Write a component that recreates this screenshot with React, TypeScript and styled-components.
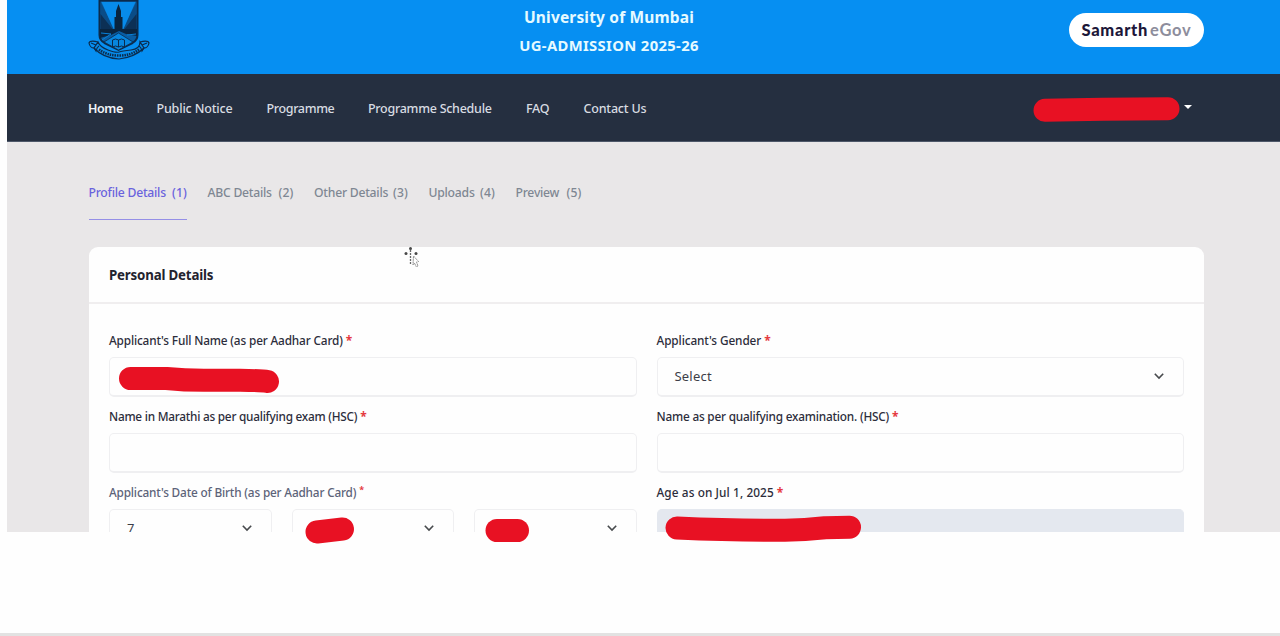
import React from "react";
import styled, { createGlobalStyle } from "styled-components";

const Global = createGlobalStyle`
  * { box-sizing: border-box; }
  body { margin: 0; background: #fff; font-family: "Noto Sans", "Open Sans", sans-serif; }
`;

const Page = styled.div`
  position: relative;
  width: 1280px;
  height: 636px;
  overflow: hidden;
  display: flex;
  flex-direction: column;
  justify-content: space-between;
  background: #fefefe;
`;

const Viewport = styled.div`
  height: 532px;
  margin-left: 7px;
  overflow: hidden;
  background: #e9e7e8;
`;

const BottomRule = styled.div`
  height: 3px;
  background: #e2e2e2;
`;

const Banner = styled.header`
  height: 74px;
  padding: 0 76px 0 81px;
  display: grid;
  grid-template-columns: 431px 180px 1fr;
  background: #068ff2;
`;

const Titles = styled.div`
  display: flex;
  flex-direction: column;
  align-items: center;
  padding-top: 3px;
  color: #e6faff;
  font-weight: 700;
  white-space: nowrap;
`;

const Title = styled.div<{ $size: number; $track: number }>`
  font-size: ${(p) => p.$size}px;
  letter-spacing: ${(p) => p.$track}px;
  line-height: 29px;
  &:first-child { line-height: 28px; }
`;

const Brand = styled.div`
  justify-self: end;
  margin-top: 13px;
  width: 135px;
  height: 34px;
  border-radius: 17px;
  background: #fff;
  display: flex;
  align-items: center;
  justify-content: center;
  gap: 2px;
  font-family: Lato, sans-serif;
  font-size: 16.5px;
  letter-spacing: 0.7px;
  line-height: 34px;
  color: #8d8d9c;
  font-weight: 700;
`;

const BrandStrong = styled.span`
  color: #1c1739;
  font-weight: 900;
`;

const Nav = styled.nav`
  height: 68px;
  padding: 2px 88px 0 81px;
  display: flex;
  align-items: center;
  gap: 34px;
  background: #252f40;
  border-bottom: 1px solid #4e5869;
`;

const NavItem = styled.a<{ $w: number; $track: number; $active?: boolean }>`
  width: ${(p) => p.$w}px;
  letter-spacing: ${(p) => p.$track}px;
  font-size: 12.5px;
  font-weight: ${(p) => (p.$active ? 600 : 500)};
  color: ${(p) => (p.$active ? "#f2f5f8" : "#d8dce2")};
  white-space: nowrap;
`;

const Caret = styled.i`
  margin-left: auto;
  margin-bottom: 3px;
  border: 4px solid transparent;
  border-top-color: #fff;
  border-bottom: 0;
`;

const Tabs = styled.div`
  height: 78px;
  margin: 0 81.5px;
  display: flex;
  gap: 20.5px;
`;

const Tab = styled.div<{ $w: number; $active?: boolean }>`
  width: ${(p) => p.$w}px;
  padding-top: 37px;
  display: flex;
  align-items: flex-start;
  justify-content: space-between;
  font-size: 12.2px;
  line-height: 27px;
  letter-spacing: -0.24px;
  font-weight: 500;
  white-space: nowrap;
  color: ${(p) => (p.$active ? "#6a63dd" : "#7f8793")};
  border-bottom: 1px solid ${(p) => (p.$active ? "#958fe6" : "transparent")};
`;

const TabNumber = styled.span`
  letter-spacing: 0.1px;
`;

const Card = styled.section`
  margin: 27px 0 0 82px;
  height: 340px;
  width: 1115px;
  background: #fefefe;
  border-radius: 9px 9px 0 0;
`;

const CardHead = styled.h2`
  margin: 0;
  height: 57px;
  padding: 0 20px;
  border-bottom: 2px solid #f0eeef;
  font-size: 13.3px;
  line-height: 56px;
  letter-spacing: -0.18px;
  font-weight: 700;
  color: #23232e;
`;

const Form = styled.div`
  padding: 26px 20px 0;
  display: grid;
  grid-template-columns: 527.5px 527.5px;
  column-gap: 20px;
  row-gap: 9px;
`;

const Field = styled.div`
  display: flex;
  flex-direction: column;
  gap: 7px;
`;

const Label = styled.label<{ $track: number; $muted?: boolean }>`
  height: 20px;
  font-size: 11.8px;
  line-height: 21px;
  letter-spacing: ${(p) => p.$track}px;
  font-weight: 500;
  white-space: nowrap;
  color: ${(p) => (p.$muted ? "#5c6379" : "#2c2d3b")};
`;

const Star = styled.span<{ $raised?: boolean }>`
  margin-left: 3px;
  color: #e53940;
  font-size: ${(p) => (p.$raised ? 9 : 12)}px;
  font-weight: 700;
  line-height: 0;
  vertical-align: ${(p) => (p.$raised ? "4px" : "baseline")};
`;

const Control = styled.div<{ $disabled?: boolean }>`
  flex: 1;
  min-height: 40px;
  max-height: 40px;
  padding: 0 18px 1px 17px;
  display: flex;
  align-items: center;
  justify-content: space-between;
  border: 1px solid ${(p) => (p.$disabled ? "#e4e8ef" : "#efeff1")};
  border-bottom-width: 2px;
  border-radius: 5px;
  background: ${(p) => (p.$disabled ? "#e4e8ef" : "#fefefe")};
  font-size: 13px;
  letter-spacing: 0.2px;
  color: #3c3e48;
`;

const DateRow = styled.div`
  display: flex;
  gap: 20px;
`;

const Overlay = styled.svg`
  position: absolute;
  inset: 0;
  pointer-events: none;
`;

const Chevron = () => (
  <svg width="12" height="8" viewBox="0 0 12 8" fill="none" stroke="#474a4d" strokeWidth="1.6">
    <path d="M1.8 1.8 6 6l4.2-4.2" />
  </svg>
);

const Crest = () => (
  <svg width="62" height="62" viewBox="0 0 62 62" fill="none" stroke="#0b2b4c">
    <path d="M11.5 0v35q0 5 5 8l14 7 14-7q5-3 5-8V0" fill="#0a5da2" strokeWidth="2" />
    <path d="M11 .7h39" strokeWidth="1.6" />
    <path d="M12.5 2 27 30H12.5zM48.5 2 34 30h14.5z" fill="#0a4c86" stroke="none" />
    <path d="M13.5 2h34L35 30h-9z" fill="#078bea" stroke="none" />
    <path d="M12.5 14v15h12zM48.5 14v15h-12z" fill="#0c3055" stroke="none" />
    <path d="M26.500 31V17h1.500v-6L30.500 4l2.500 7v6h1.500v14z" fill="#09243f" stroke="none" />
    <path d="M12 29h37v7l-11-2-7-3-8 4-11 3z" fill="#09243f" stroke="none" />
    <path d="M13 33l10 1-9 6M48 34l-9 1" stroke="#0880d8" />
    <path d="M30.5 33 45 42l-14.5 8L16 42z" fill="#0786df" strokeWidth=".8" />
    <path d="M24.5 40q3-2 6 0 3-2 6 0v7q-3-2-6 0-3-2-6 0zM30.5 40v7" strokeWidth="1" />
    <path d="M10 42q2 5 10 8t11 2 12-2 9-8l4 6q-9 9-25 11Q15 58 6 48z" fill="#078be9" strokeWidth="1.2" />
    <path d="M10 42q-8-2-9 1 1 5 5 5l2 3q1-4 3-5M52 42q8-2 9 1-1 5-5 5l-2 3q-1-4-3-5M3 43l5 2M59 43l-5 2" strokeWidth="1.2" />
    <path d="M11 49.500q8 6 20 6t20-6" strokeWidth="2.5" strokeDasharray="1.5 .9" />
  </svg>
);

const navItems: [string, number, number][] = [
  ["Home", 34.5, -0.4],
  ["Public Notice", 76, -0.17],
  ["Programme", 67.5, -0.35],
  ["Programme Schedule", 124, -0.27],
  ["FAQ", 23.5, -0.3],
  ["Contact Us", 64, -0.2],
];

const tabs: [string, number][] = [
  ["Profile Details", 98.5],
  ["ABC Details", 86],
  ["Other Details", 94],
  ["Uploads", 66.5],
  ["Preview", 66],
];

export default function App() {
  return (
    <Page>
      <Global />
      <Viewport>
        <Banner>
          <Crest />
          <Titles>
            <Title $size={15.5} $track={0.17}>University of Mumbai</Title>
            <Title $size={14.8} $track={0.35}>UG-ADMISSION 2025-26</Title>
          </Titles>
          <Brand>
            <BrandStrong>Samarth</BrandStrong>
            <span>eGov</span>
          </Brand>
        </Banner>
        <Nav>
          {navItems.map(([name, w, track], i) => (
            <NavItem key={name} $w={w} $track={track} $active={i === 0}>{name}</NavItem>
          ))}
          <Caret />
        </Nav>
        <Tabs>
          {tabs.map(([name, w], i) => (
            <Tab key={name} $w={w} $active={i === 0}>
              <span>{name}</span>
              <TabNumber>({i + 1})</TabNumber>
            </Tab>
          ))}
        </Tabs>
        <Card>
          <CardHead>Personal Details</CardHead>
          <Form>
            <Field>
              <Label $track={-0.15}>Applicant's Full Name (as per Aadhar Card)<Star>*</Star></Label>
              <Control />
            </Field>
            <Field>
              <Label $track={-0.1}>Applicant's Gender<Star>*</Star></Label>
              <Control><span>Select</span><Chevron /></Control>
            </Field>
            <Field>
              <Label $track={-0.24}>Name in Marathi as per qualifying exam (HSC)<Star>*</Star></Label>
              <Control />
            </Field>
            <Field>
              <Label $track={-0.2}>Name as per qualifying examination. (HSC)<Star>*</Star></Label>
              <Control />
            </Field>
            <Field>
              <Label $track={-0.17} $muted>Applicant's Date of Birth (as per Aadhar Card)<Star $raised>*</Star></Label>
              <DateRow>
                <Control><span>7</span><Chevron /></Control>
                <Control><span /><Chevron /></Control>
                <Control><span /><Chevron /></Control>
              </DateRow>
            </Field>
            <Field>
              <Label $track={0.1}>Age as on Jul 1, 2025<Star>*</Star></Label>
              <Control $disabled />
            </Field>
          </Form>
        </Card>
      </Viewport>
      <BottomRule />
      <Overlay width="1280" height="636" viewBox="0 0 1280 636" fill="none">
        <g stroke="#e81123" strokeWidth="23" strokeLinecap="round" strokeLinejoin="round">
          <path d="M1045 110.300Q1100 108.700 1168 108.700" />
          <path d="M130.500 378.500h36Q184 380.300 204 380.300h36Q262 380.500 267.500 381.500" />
          <path d="M317 532 342.500 529" />
          <path d="M497 530.500h20.500" />
          <path d="M677 528Q735 530.500 785 530.300 805 530 825 527.800L849.500 527.200" />
        </g>
        <g fill="#484848">
          <circle cx="410.5" cy="248.5" r="1.5" />
          <circle cx="406" cy="253.5" r="1.5" />
          <circle cx="416" cy="253.5" r="1.5" />
          <path d="M410.5 250v14" stroke="#666" strokeWidth="1.3" strokeDasharray="2 1" />
          <path d="m413.5 256 5 5.5-2 .5 1.5 4-2 .5-1.5-3.5-1.5 2z" fill="#fff" stroke="#777" strokeWidth=".9" strokeDasharray="1.5 .7" />
        </g>
      </Overlay>
    </Page>
  );
}
